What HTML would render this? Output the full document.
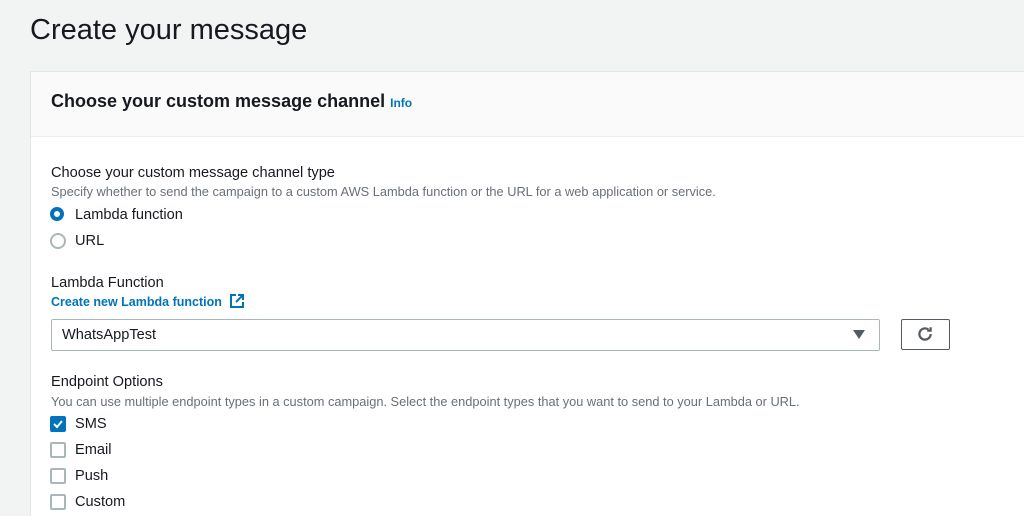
<!DOCTYPE html>
<html><head><style>
html,body{margin:0;width:1024px;height:516px;overflow:hidden}
body{background:#f2f3f3;font-family:"Liberation Sans",Arial,sans-serif;color:#16191f;position:relative}
.a{position:absolute;white-space:nowrap}
h1{position:absolute;left:30px;top:14px;margin:0;font-size:29px;font-weight:400;color:#16191f}
.panel{position:absolute;left:30px;top:71px;width:993px;height:445px;background:#fff;border:1px solid #e4e6e6;border-bottom:none;border-right:none}
.hdr{position:absolute;left:0;top:0;right:0;height:64px;background:#fafafa;border-bottom:1px solid #eaeded}
.lbl{font-size:14.6px}
.desc{font-size:12.8px;color:#687078}
.radio{position:absolute;width:12px;height:12px;border-radius:50%;border:2px solid #aab7b8;background:#fff}
.radio.on{border:4px solid #0073bb;width:6px;height:6px}
.cb{position:absolute;width:12px;height:12px;border:2px solid #aab7b8;border-radius:2px;background:#fff}
</style></head><body>
<h1>Create your message</h1>
<div class="panel"><div class="hdr"></div></div>
<div class="a" style="left:51px;top:91px;font-size:18px;font-weight:700">Choose your custom message channel <span style="color:#0073bb;font-size:12px">Info</span></div>
<div class="a lbl" style="left:51px;top:165px">Choose your custom message channel type</div>
<div class="a desc" style="left:51px;top:184px">Specify whether to send the campaign to a custom AWS Lambda function or the URL for a web application or service.</div>
<div class="radio on" style="left:50px;top:207px"></div><div class="a lbl" style="left:75px;top:207px">Lambda function</div>
<div class="radio" style="left:50px;top:233px"></div><div class="a lbl" style="left:75px;top:233px">URL</div>
<div class="a lbl" style="left:51px;top:275px">Lambda Function</div>
<div class="a" style="left:51px;top:295px;font-size:12.5px;font-weight:700;color:#0073bb">Create new Lambda function</div>
<svg class="a" style="left:229px;top:293px" width="16" height="16" viewBox="0 0 16 16" fill="none" stroke="#0073bb" stroke-width="2"><path d="M7 2H2v12h12V9M9 2h5v5M14 2L7 9"/></svg>
<div class="a" style="left:51px;top:319px;width:827px;height:30px;border:1px solid #aab7b8;border-radius:2px;background:#fff"></div>
<div class="a lbl" style="left:62px;top:327px">WhatsAppTest</div>
<svg class="a" style="left:853px;top:330px" width="12" height="9"><path d="M0 0h12L6 9z" fill="#545b64"/></svg>
<div class="a" style="left:901px;top:319px;width:47px;height:29px;border:1px solid #545b64;border-radius:2px;background:#fff"></div>
<svg class="a" style="left:916px;top:325px" width="18" height="18" viewBox="0 0 16 16" fill="none" stroke="#545b64" stroke-width="2"><path d="M13 8a5 5 0 1 1-2-4M13 2v3h-3"/></svg>
<div class="a lbl" style="left:51px;top:374px">Endpoint Options</div>
<div class="a desc" style="left:51px;top:394px">You can use multiple endpoint types in a custom campaign. Select the endpoint types that you want to send to your Lambda or URL.</div>
<div class="cb" style="left:50px;top:416px;background:#0073bb;border-color:#0073bb"></div>
<svg class="a" style="left:52px;top:418px" width="12" height="12"><path d="M2 6l3 3 5-6" fill="none" stroke="#fff" stroke-width="2"/></svg>
<div class="a lbl" style="left:75px;top:416px">SMS</div>
<div class="cb" style="left:50px;top:442px"></div><div class="a lbl" style="left:75px;top:442px">Email</div>
<div class="cb" style="left:50px;top:468px"></div><div class="a lbl" style="left:75px;top:468px">Push</div>
<div class="cb" style="left:50px;top:494px"></div><div class="a lbl" style="left:75px;top:494px">Custom</div>
</body></html>
